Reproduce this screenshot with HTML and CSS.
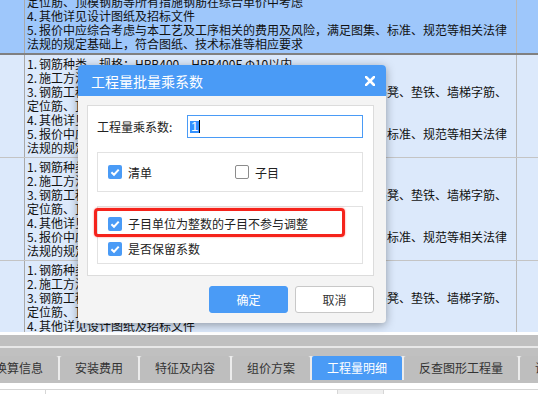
FILE: index.html
```html
<!DOCTYPE html>
<html lang="zh-CN">
<head>
  <meta charset="UTF-8">
  <meta name="viewport" content="width=device-width, initial-scale=1.0">
  <title>工程量批量乘系数</title>
  <link rel="stylesheet" href="styles.css">
</head>
<body>
  <div class="grid">
    <div class="grid-body">
      <div class="row selected">
        <div class="idx"></div>
        <div class="desc">
          <div><span class="n">1.</span>钢筋种类、规格：HRB400、HRB400E Φ10以内</div>
          <div><span class="n">2.</span>施工方法：现场制作、绑扎安装</div>
          <div><span class="n">3.</span>钢筋工程量按设计图示及规范要求计算，钢筋搭接、锚固长度、马凳、垫铁、墙梯字筋、</div>
          <div>定位筋、顶模钢筋等所有措施钢筋在综合单价中考虑</div>
          <div><span class="n">4.</span>其他详见设计图纸及招标文件</div>
          <div><span class="n">5.</span>报价中应综合考虑与本工艺及工序相关的费用及风险，满足图集、标准、规范等相关法律</div>
          <div>法规的规定基础上，符合图纸、技术标准等相应要求</div>
        </div>
        <div class="extra"></div>
      </div>
      <div class="row">
        <div class="idx"></div>
        <div class="desc">
          <div><span class="n">1.</span>钢筋种类、规格：HRB400、HRB400E Φ10以内</div>
          <div><span class="n">2.</span>施工方法：现场制作、绑扎安装</div>
          <div><span class="n">3.</span>钢筋工程量按设计图示及规范要求计算，钢筋搭接、锚固长度、马凳、垫铁、墙梯字筋、</div>
          <div>定位筋、顶模钢筋等所有措施钢筋在综合单价中考虑</div>
          <div><span class="n">4.</span>其他详见设计图纸及招标文件</div>
          <div><span class="n">5.</span>报价中应综合考虑与本工艺及工序相关的费用及风险，满足图集、标准、规范等相关法律</div>
          <div>法规的规定基础上，符合图纸、技术标准等相应要求</div>
        </div>
        <div class="extra"></div>
      </div>
      <div class="row">
        <div class="idx"></div>
        <div class="desc">
          <div><span class="n">1.</span>钢筋种类、规格：HRB400、HRB400E Φ12以上</div>
          <div><span class="n">2.</span>施工方法：现场制作、绑扎安装</div>
          <div><span class="n">3.</span>钢筋工程量按设计图示及规范要求计算，钢筋搭接、锚固长度、马凳、垫铁、墙梯字筋、</div>
          <div>定位筋、顶模钢筋等所有措施钢筋在综合单价中考虑</div>
          <div><span class="n">4.</span>其他详见设计图纸及招标文件</div>
          <div><span class="n">5.</span>报价中应综合考虑与本工艺及工序相关的费用及风险，满足图集、标准、规范等相关法律</div>
          <div>法规的规定基础上，符合图纸、技术标准等相应要求</div>
        </div>
        <div class="extra"></div>
      </div>
      <div class="row">
        <div class="idx"></div>
        <div class="desc">
          <div><span class="n">1.</span>钢筋种类、规格：HRB400、HRB400E 箍筋</div>
          <div><span class="n">2.</span>施工方法：现场制作、绑扎安装</div>
          <div><span class="n">3.</span>钢筋工程量按设计图示及规范要求计算，钢筋搭接、锚固长度、马凳、垫铁、墙梯字筋、</div>
          <div>定位筋、顶模钢筋等所有措施钢筋在综合单价中考虑</div>
          <div><span class="n">4.</span>其他详见设计图纸及招标文件</div>
          <div><span class="n">5.</span>报价中应综合考虑与本工艺及工序相关的费用及风险，满足图集、标准、规范等相关法律</div>
          <div>法规的规定基础上，符合图纸、技术标准等相应要求</div>
        </div>
        <div class="extra"></div>
      </div>
    </div>
  </div>

  <div class="hscroll"></div>
  <div class="tabbar">
    <div class="tabs">
      <span class="tab">换算信息</span>
      <span class="tab">安装费用</span>
      <span class="tab">特征及内容</span>
      <span class="tab">组价方案</span>
      <span class="tab active">工程量明细</span>
      <span class="tab">反查图形工程量</span>
      <span class="tab">说明信息</span>
    </div>
  </div>
  <div class="subgrid">
    <div class="subhead">
      <span class="cell c1"></span>
      <span class="cell c2"></span>
      <span class="cell c3"></span>
    </div>
  </div>

  <div class="dialog">
    <div class="dialog-title">
      <span>工程量批量乘系数</span>
      <svg class="close" width="10" height="10" viewBox="0 0 10 10">
        <path d="M1 1 L9 9 M9 1 L1 9" stroke="#fff" stroke-width="2.6" stroke-linecap="square"/>
      </svg>
    </div>
    <div class="dialog-body">
      <div class="panel">
        <div class="field">
          <span class="field-label">工程量乘系数:</span>
          <div class="input"><span class="sel">1</span><span class="caret"></span></div>
        </div>
        <div class="group group-scope">
          <label class="check">
            <span class="box"><svg width="14" height="14" viewBox="0 0 14 14"><path d="M3.4 7.2 L6 9.7 L10.7 4.6" fill="none" stroke="#fff" stroke-width="2"/></svg></span>
            清单
          </label>
          <label class="check">
            <span class="box off"></span>
            子目
          </label>
        </div>
        <div class="group group-opts">
          <label class="check">
            <span class="box"><svg width="14" height="14" viewBox="0 0 14 14"><path d="M3.4 7.2 L6 9.7 L10.7 4.6" fill="none" stroke="#fff" stroke-width="2"/></svg></span>
            子目单位为整数的子目不参与调整
          </label>
          <label class="check">
            <span class="box"><svg width="14" height="14" viewBox="0 0 14 14"><path d="M3.4 7.2 L6 9.7 L10.7 4.6" fill="none" stroke="#fff" stroke-width="2"/></svg></span>
            是否保留系数
          </label>
        </div>
      </div>
      <div class="actions">
        <button class="btn primary">确定</button>
        <button class="btn">取消</button>
      </div>
    </div>
  </div>
  <div class="mark"></div>
</body>
</html>
```

FILE: styles.css
```css
body {
  margin: 0;
  width: 538px;
  height: 394px;
  overflow: hidden;
  position: relative;
  background: #fff;
  font-family: "Noto Sans CJK SC", "Noto Sans", sans-serif;
}

/* background grid */
.grid {
  height: 332px;
  overflow: hidden;
  border-bottom: 3px solid #fff;
}
.grid-body {
  margin-top: -49px;
}
.row {
  display: flex;
  background: #dce9fb;
  border-bottom: 1px solid #c4c4c4;
}
.row.selected {
  background: #9ec7fb;
  border-bottom: 2px solid #808080;
}
.idx {
  width: 24px;
  border-right: 1px solid #a9a9a9;
}
.desc {
  flex: 1;
  padding: 2px 2px;
  border-right: 1px solid #b9b9b9;
  font-size: 12px;
  line-height: 14px;
  color: #111;
  white-space: nowrap;
  overflow: hidden;
}
.desc .n {
  display: inline-block;
  width: 12px;
}
.extra {
  width: 21px;
}

/* bottom tabs */
.hscroll {
  height: 11px;
  background: #c0c0c0;
  border-bottom: 2px solid #e8e8e8;
}
.tabbar {
  background: #c0c0c0;
  padding: 8px 0 3px;
  overflow: hidden;
}
.tabs {
  display: flex;
  gap: 2px;
  margin-left: -20px;
  width: max-content;
  background: #ececec;
}
.tab {
  height: 24px;
  line-height: 24px;
  padding: 0 15px;
  background: #bebebe;
  font-size: 12px;
  color: #333;
  border-radius: 2px 2px 0 0;
}
.tab.active {
  background: #4a9bf6;
  color: #fff;
}
.subgrid {
  height: 11px;
  padding-top: 6px;
  box-sizing: border-box;
  background: #fff;
}
.subhead {
  display: flex;
  height: 5px;
  border-top: 1px solid #d6d6d6;
}
.cell {
  border-right: 1px solid #d6d6d6;
}
.c1 { width: 45px; }
.c2 { width: 291px; }
.c3 { width: 45px; background: #efefef; }

/* dialog */
.dialog {
  position: absolute;
  left: 78px;
  top: 65px;
  width: 308px;
  background: #f4f4f4;
  border-radius: 4px;
  overflow: hidden;
  box-shadow: 0 2px 10px rgba(0, 0, 0, 0.35);
  font-size: 12px;
  color: #222;
}
.dialog-title {
  height: 31px;
  background: #4a9bf6;
  color: #fff;
  font-size: 14px;
  display: flex;
  align-items: center;
  justify-content: space-between;
  padding: 0 11px 0 13px;
}
.dialog-body {
  padding: 9px 12px 10px 9px;
}
.panel {
  background: #fff;
  border: 1px solid #dcdcdc;
  padding: 9px 10px 11px 9px;
}
.field {
  display: flex;
  align-items: center;
}
.field-label {
  width: 90px;
}
.input {
  flex: 1;
  height: 23px;
  box-sizing: border-box;
  border: 1px solid #4a9bf6;
  padding: 0 2px;
  display: flex;
  align-items: center;
}
.sel {
  background: #3390ff;
  color: #fff;
  font-family: "Liberation Sans", sans-serif;
  font-size: 13px;
  line-height: 12px;
  padding: 0 1px;
}
.caret {
  width: 1px;
  height: 13px;
  background: #000;
}
.group {
  border: 1px solid #e2e2e2;
  margin-top: 14px;
  padding: 0 10px;
}
.group-scope {
  height: 38px;
  display: grid;
  grid-template-columns: 127px auto;
  align-items: center;
}
.group-opts {
  padding: 4px 10px 2px;
}
.group-opts .check {
  height: 25px;
}
.check {
  display: flex;
  align-items: center;
  gap: 6px;
}
.box {
  width: 14px;
  height: 14px;
  border-radius: 2px;
  background: #4a9bf6;
  box-sizing: border-box;
}
.box svg {
  display: block;
}
.box.off {
  background: #fff;
  border: 1px solid #8c8c8c;
}
.actions {
  display: flex;
  justify-content: flex-end;
  gap: 7px;
  margin-top: 10px;
}
.btn {
  width: 79px;
  height: 27px;
  border: 1px solid #c8c8c8;
  border-radius: 3px;
  background: #fff;
  font-family: inherit;
  font-size: 12px;
  color: #333;
}
.btn.primary {
  background: #4a9bf6;
  border-color: #4a9bf6;
  color: #fff;
}

/* red annotation frame */
.mark {
  position: absolute;
  left: 94px;
  top: 208px;
  width: 251px;
  height: 29px;
  box-sizing: border-box;
  border: 3px solid #f5231b;
  border-radius: 4px;
  box-shadow: 0 0 2px rgba(255, 40, 30, 0.6);
}
```
